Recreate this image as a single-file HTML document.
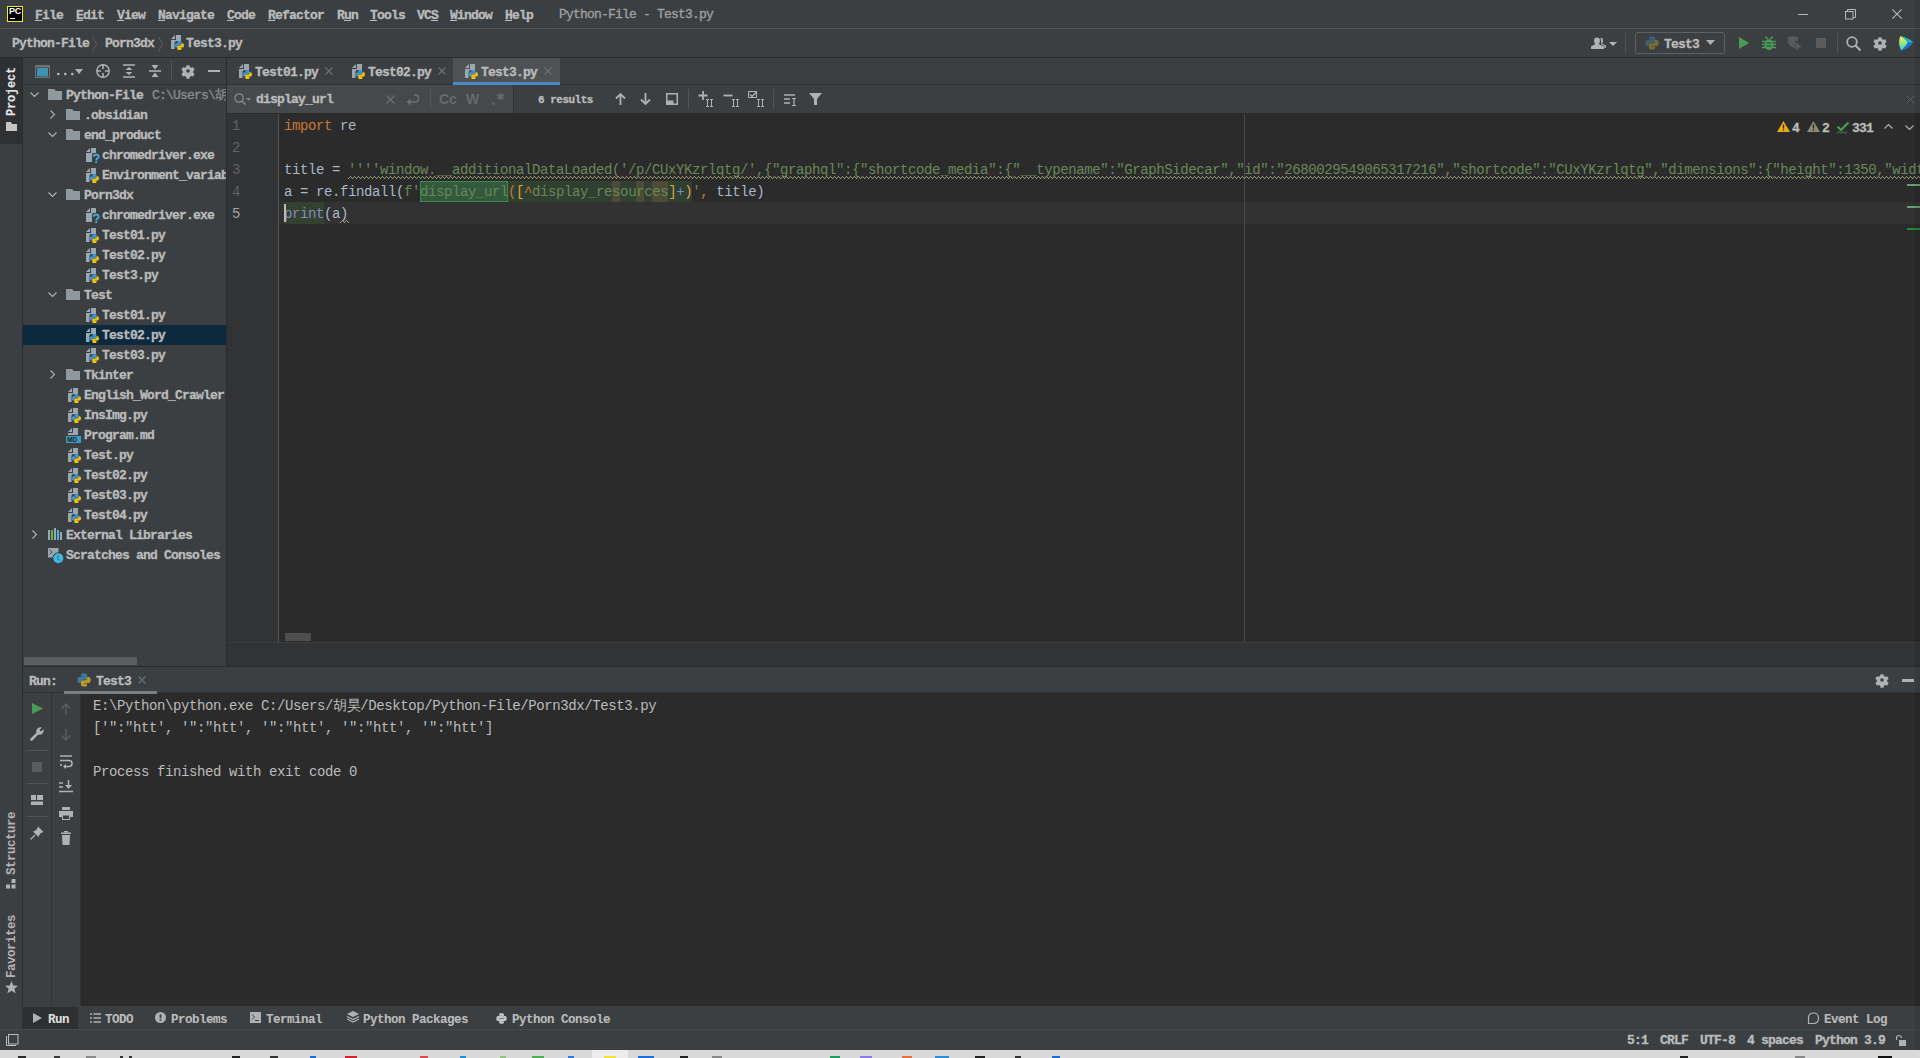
<!DOCTYPE html><html><head><meta charset="utf-8"><style>
*{box-sizing:border-box;margin:0;padding:0}
html,body{width:1920px;height:1058px;overflow:hidden;background:#3c3f41}
body{position:relative;font-family:"Liberation Mono",monospace;color:#bbbbbb}
.a{position:absolute}
.ui{position:absolute;font-family:"Liberation Mono",monospace;font-weight:bold;font-size:13px;letter-spacing:-0.8px;-webkit-text-stroke:0.3px currentColor;margin-top:1px;white-space:pre;line-height:16px;color:#bbbbbb}
.code{position:absolute;font-family:"Liberation Mono",monospace;font-size:14px;letter-spacing:-0.4px;white-space:pre;line-height:22px;height:22px}
svg{position:absolute;overflow:visible}
:root{--pb:#3b95d3;--py:#f2c40c}
.bt{font-size:12.5px !important;letter-spacing:-0.5px !important}
.k{color:#cc7832}.s{color:#6a8759}.t{color:#a9b7c6}.n{color:#6897bb}.b{color:#8888c6}
</style></head><body>

<svg width="0" height="0" style="position:absolute">
<defs>
<symbol id="pylogo" viewBox="0 0 16 16">
<path d="M6 0.5H9.5Q11.5 0.5 11.5 2.5V6.2Q11.5 7.8 10 7.8H6.2Q4.5 7.8 4.5 9.5V11.5H2.5Q0.5 11.5 0.5 9V7Q0.5 4.5 3 4.5H8V4H4.5V2.5Q4.5 0.5 6 0.5Z" style="fill:var(--pb)"/>
<path d="M10 15.5H6.5Q4.5 15.5 4.5 13.5V9.8Q4.5 8.2 6 8.2H9.8Q11.5 8.2 11.5 6.5V4.5H13.5Q15.5 4.5 15.5 7V9Q15.5 11.5 13 11.5H8V12H11.5V13.5Q11.5 15.5 10 15.5Z" style="fill:var(--py)"/>
</symbol>
<symbol id="pyf" viewBox="0 0 16 16">
<path d="M2 5L6 1V5Z" fill="#9aa7b0"/>
<path d="M7 1H12V7H7.5Q5.5 7 5.5 9V15H2V6H7Z" fill="#9aa7b0"/>
<use href="#pylogo" x="5.6" y="6.6" width="9.6" height="9.6"/>
</symbol>
<symbol id="exef" viewBox="0 0 16 16">
<path d="M2 5L6 1V5Z" fill="#9aa7b0"/>
<path d="M7 1H12V6H9.5Q8 6 8 8V15H2V6H7Z" fill="#9aa7b0"/>
<path d="M9.7 9.8Q9.7 7.6 12.2 7.6Q14.6 7.6 14.6 9.7Q14.6 11 13.2 11.6Q12.2 12 12.2 13.4" fill="none" stroke="#40b6e0" stroke-width="1.7"/>
<rect x="11.3" y="14.3" width="1.8" height="1.8" fill="#40b6e0"/>
</symbol>
<symbol id="mdf" viewBox="0 0 16 16">
<path d="M2 5L6 1V5Z" fill="#9aa7b0"/>
<path d="M7 1H12V8H2V6H7Z" fill="#9aa7b0"/>
<rect x="0" y="9" width="15" height="7" fill="#3d9bc7"/>
<text x="1.2" y="15" font-family="Liberation Sans" font-weight="bold" font-size="6.5" fill="#231f20">MD</text>
</symbol>
<symbol id="folder" viewBox="0 0 14 11">
<path d="M0 0H6L8 2H14V11H0Z" fill="#8d989f"/>
</symbol>
</defs></svg>

<div class="a" style="left:0px;top:28px;width:1920px;height:1px;background:#515354;"></div>
<div class="a" style="left:7px;top:6px;width:16px;height:16px;background:#000;border:1px solid #f4ea2d"></div>
<div class="a" style="left:9px;top:7px;font:bold 9px 'Liberation Sans',sans-serif;color:#fff;letter-spacing:-0.3px;line-height:9px">PC</div>
<div class="a" style="left:10px;top:18px;width:5px;height:1px;background:#fff;"></div>
<div class="ui" style="left:35px;top:7px;">File</div>
<div class="a" style="left:35px;top:20px;width:7px;height:1px;background:#bbbbbb;"></div>
<div class="ui" style="left:76px;top:7px;">Edit</div>
<div class="a" style="left:76px;top:20px;width:7px;height:1px;background:#bbbbbb;"></div>
<div class="ui" style="left:117px;top:7px;">View</div>
<div class="a" style="left:117px;top:20px;width:7px;height:1px;background:#bbbbbb;"></div>
<div class="ui" style="left:158px;top:7px;">Navigate</div>
<div class="a" style="left:158px;top:20px;width:7px;height:1px;background:#bbbbbb;"></div>
<div class="ui" style="left:227px;top:7px;">Code</div>
<div class="a" style="left:227px;top:20px;width:7px;height:1px;background:#bbbbbb;"></div>
<div class="ui" style="left:268px;top:7px;">Refactor</div>
<div class="a" style="left:268px;top:20px;width:7px;height:1px;background:#bbbbbb;"></div>
<div class="ui" style="left:337px;top:7px;">Run</div>
<div class="a" style="left:344px;top:20px;width:7px;height:1px;background:#bbbbbb;"></div>
<div class="ui" style="left:370px;top:7px;">Tools</div>
<div class="a" style="left:370px;top:20px;width:7px;height:1px;background:#bbbbbb;"></div>
<div class="ui" style="left:417px;top:7px;">VCS</div>
<div class="a" style="left:431px;top:20px;width:7px;height:1px;background:#bbbbbb;"></div>
<div class="ui" style="left:450px;top:7px;">Window</div>
<div class="a" style="left:450px;top:20px;width:7px;height:1px;background:#bbbbbb;"></div>
<div class="ui" style="left:505px;top:7px;">Help</div>
<div class="a" style="left:505px;top:20px;width:7px;height:1px;background:#bbbbbb;"></div>
<div class="ui" style="left:559px;top:6px;color:#a0a0a0;font-weight:normal">Python-File - Test3.py</div>
<div class="a" style="left:1798px;top:14px;width:10px;height:1px;background:#b8b8b8;"></div>
<svg style="left:1845px;top:9px" width="11" height="11" viewBox="0 0 11 11"><rect x="0.5" y="2.5" width="7.5" height="7.5" fill="none" stroke="#b8b8b8"/><path d="M2.5 2.5V0.5H10.5V8.5H8" fill="none" stroke="#b8b8b8"/></svg>
<svg style="left:1892px;top:9px" width="10" height="10" viewBox="0 0 10 10"><path d="M0.3 0.3L9.7 9.7M9.7 0.3L0.3 9.7" stroke="#b8b8b8" stroke-width="1.1"/></svg>
<div class="ui" style="left:12px;top:35px;">Python-File</div>
<svg style="left:92px;top:36px" width="6" height="16" viewBox="0 0 6 16"><path d="M0.5 0.5L4.5 8L0.5 15.5" fill="none" stroke="#5b5d5f"/></svg>
<div class="ui" style="left:105px;top:35px;">Porn3dx</div>
<svg style="left:158px;top:36px" width="6" height="16" viewBox="0 0 6 16"><path d="M0.5 0.5L4.5 8L0.5 15.5" fill="none" stroke="#5b5d5f"/></svg>
<svg style="left:169px;top:34px" width="16" height="16"><use href="#pyf" width="16" height="16"/></svg>
<div class="ui" style="left:186px;top:35px;">Test3.py</div>
<svg style="left:1591px;top:37px" width="26" height="13" viewBox="0 0 26 13"><path d="M3 3.5Q3 0.5 6 0.5Q9 0.5 9 3.5Q9 6 7.5 7L13 9.5V12H0V9.5L4.5 7Q3 6 3 3.5Z" fill="#afb1b3"/><path d="M9.5 0.8Q12 0.5 12 3.5Q12 5.5 11 6.5L15 8.5V11H13.5V9L10.5 7.5" fill="#afb1b3"/><path d="M18 5H26L22 9Z" fill="#afb1b3"/></svg>
<div class="a" style="left:1625px;top:33px;width:1px;height:20px;background:#515354;"></div>
<div class="a" style="left:1635px;top:32px;width:90px;height:22px;border:1px solid #5e6163;border-radius:3px"></div>
<svg style="left:1645px;top:36px;--pb:#3e6075;--py:#7a6d33" width="14" height="14"><use href="#pylogo" width="14" height="14"/></svg>
<div class="ui" style="left:1664px;top:36px;">Test3</div>
<svg style="left:1706px;top:40px" width="9" height="6" viewBox="0 0 9 6"><path d="M0 0H9L4.5 5Z" fill="#afb1b3"/></svg>
<svg style="left:1739px;top:37px" width="10" height="12" viewBox="0 0 10 12"><path d="M0 0L10 6L0 12Z" fill="#499c54"/></svg>
<svg style="left:1762px;top:36px" width="14" height="14" viewBox="0 0 14 14"><path d="M3.3 0.5L6 3.2M10.7 0.5L8 3.2" stroke="#499c54" stroke-width="1.6"/><ellipse cx="7" cy="8.6" rx="4.2" ry="5.4" fill="#499c54"/><path d="M0 5.5H14M0 8.5H14M0 11.5H14" stroke="#499c54" stroke-width="1.5"/><path d="M4.6 7H9.4M4.6 10H9.4" stroke="#3c3f41" stroke-width="1.1"/></svg>
<svg style="left:1788px;top:36px" width="16" height="14" viewBox="0 0 16 14"><path d="M0 1Q5 -0.5 10 1V5H7.5V12.5Q0.5 10.5 0 6Z" fill="#5a5a5a"/><path d="M8 6.5V14L13.5 10.2Z" fill="#5a5a5a"/></svg>
<div class="a" style="left:1816px;top:38px;width:10px;height:10px;background:#5b5b5b;"></div>
<div class="a" style="left:1837px;top:33px;width:1px;height:20px;background:#515354;"></div>
<svg style="left:1846px;top:36px" width="16" height="16" viewBox="0 0 16 16"><circle cx="6" cy="6" r="4.8" fill="none" stroke="#afb1b3" stroke-width="1.8"/><path d="M9.5 9.5L14.5 14.5" stroke="#afb1b3" stroke-width="2"/></svg>
<svg style="left:1873px;top:36px" width="14" height="14" viewBox="-0.8 -0.8 15.6 15.6"><path d="M7 7m-1.6 -6.5h3.2l0.5 2.1 1.6 0.9 2.1-0.7 1.6 2.8-1.6 1.5v1.8l1.6 1.5-1.6 2.8-2.1-0.7-1.6 0.9-0.5 2.1h-3.2l-0.5-2.1-1.6-0.9-2.1 0.7-1.6-2.8 1.6-1.5v-1.8l-1.6-1.5 1.6-2.8 2.1 0.7 1.6-0.9z" fill="#afb1b3"/><circle cx="7" cy="7" r="2" fill="#3c3f41"/></svg>
<svg style="left:1899px;top:36px" width="15" height="15" viewBox="0 0 15 15"><defs><linearGradient id="jb1" x1="0" y1="0" x2="0" y2="1"><stop offset="0" stop-color="#fbf54c"/><stop offset="0.5" stop-color="#9be47a"/><stop offset="1" stop-color="#1fd0ee"/></linearGradient></defs><path d="M1.5 0C6 3 9 5 8.5 7C8 9 5 12 2.5 14.5C-0.5 10 -0.5 4 1.5 0Z" fill="url(#jb1)"/><path d="M1.5 0C6 0.5 11 3 14.5 6.5L8.5 7C9 5 6 3 1.5 0Z" fill="#16b6c9"/><path d="M8.5 7L14.5 6.5C11 11 6 14 2.5 14.5C5 12 8 9 8.5 7Z" fill="#1e6fd6"/></svg>
<div class="a" style="left:0px;top:57px;width:1920px;height:1px;background:#2b2b2b;"></div>
<div class="a" style="left:0px;top:58px;width:22px;height:948px;background:#3c3f41;"></div>
<div class="a" style="left:0px;top:58px;width:22px;height:86px;background:#2e3032;"></div>
<div class="a" style="left:22px;top:58px;width:1px;height:948px;background:#2b2b2b;"></div>
<div class="ui" style="left:6px;top:115px;transform-origin:0 0;transform:rotate(-90deg);color:#e6e6e6;line-height:13px;font-size:12px;letter-spacing:-0.2px;-webkit-text-stroke:0.1px currentColor">Project</div>
<svg style="left:6px;top:122px" width="11" height="9" viewBox="0 0 11 9"><path d="M0 0H5L6 2H11V9H0Z" fill="#c4c4c4"/></svg>
<div class="ui" style="left:5px;top:874px;transform-origin:0 0;transform:rotate(-90deg);line-height:14px;color:#b4b4b4;font-size:12.5px;letter-spacing:-0.5px;-webkit-text-stroke:0">Structure</div>
<svg style="left:6px;top:879px" width="10" height="10" viewBox="0 0 10 10"><rect x="5.5" y="0" width="4" height="4" fill="#afb1b3"/><rect x="0" y="5.5" width="4" height="4" fill="#afb1b3"/><rect x="5.5" y="5.5" width="4" height="4" fill="#afb1b3"/></svg>
<div class="ui" style="left:5px;top:977px;transform-origin:0 0;transform:rotate(-90deg);line-height:14px;color:#b4b4b4;font-size:12.5px;letter-spacing:-0.5px;-webkit-text-stroke:0">Favorites</div>
<svg style="left:5px;top:981px" width="13" height="13" viewBox="0 0 13 13"><path d="M6.5 0L8.3 4.4L13 4.7L9.4 7.7L10.6 12.3L6.5 9.7L2.4 12.3L3.6 7.7L0 4.7L4.7 4.4Z" fill="#afb1b3"/></svg>
<div class="a" style="left:23px;top:58px;width:203px;height:608px;background:#3c3f41;"></div>
<div class="a" style="left:226px;top:58px;width:1px;height:608px;background:#2b2b2b;"></div>
<svg style="left:35px;top:65px" width="15" height="13" viewBox="0 0 15 13"><rect x="0.5" y="0.5" width="14" height="12" fill="none" stroke="#6e7376"/><rect x="0.5" y="0.5" width="14" height="2" fill="#6e7376"/><rect x="2" y="3" width="11" height="8.5" fill="#3e93b5"/></svg>
<svg style="left:57px;top:69px" width="27" height="6" viewBox="0 0 27 6"><circle cx="1.3" cy="5" r="1.3" fill="#bbbbbb"/><circle cx="8.3" cy="5" r="1.3" fill="#bbbbbb"/><circle cx="15.3" cy="5" r="1.3" fill="#bbbbbb"/><path d="M18 0H26L22 5Z" fill="#afb1b3"/></svg>
<svg style="left:96px;top:64px" width="14" height="14" viewBox="0 0 14 14"><circle cx="7" cy="7" r="6.2" fill="none" stroke="#afb1b3" stroke-width="1.4"/><path d="M7 0.5V5M7 9V13.5M0.5 7H5M9 7H13.5" stroke="#afb1b3" stroke-width="1.6"/></svg>
<svg style="left:123px;top:64px" width="12" height="14" viewBox="0 0 12 14"><path d="M0 1H12M0 13H12" stroke="#afb1b3" stroke-width="1.6"/><path d="M6 3L9.5 6H2.5ZM6 11L9.5 8H2.5Z" fill="#afb1b3"/></svg>
<svg style="left:149px;top:64px" width="12" height="14" viewBox="0 0 12 14"><path d="M0 7H12" stroke="#afb1b3" stroke-width="1.6"/><path d="M6 5.5L9.5 1H2.5ZM6 8.5L9.5 13H2.5Z" fill="#afb1b3"/></svg>
<div class="a" style="left:171px;top:61px;width:1px;height:20px;background:#515354;"></div>
<svg style="left:181px;top:64px" width="14" height="14" viewBox="-0.8 -0.8 15.6 15.6"><path d="M7 7m-1.6 -6.5h3.2l0.5 2.1 1.6 0.9 2.1-0.7 1.6 2.8-1.6 1.5v1.8l1.6 1.5-1.6 2.8-2.1-0.7-1.6 0.9-0.5 2.1h-3.2l-0.5-2.1-1.6-0.9-2.1 0.7-1.6-2.8 1.6-1.5v-1.8l-1.6-1.5 1.6-2.8 2.1 0.7 1.6-0.9z" fill="#afb1b3"/><circle cx="7" cy="7" r="2" fill="#3c3f41"/></svg>
<div class="a" style="left:208px;top:70px;width:12px;height:2px;background:#afb1b3;"></div>
<div class="a" style="left:23px;top:84px;width:203px;height:1px;background:#323232;"></div>
<div class="a" style="left:23px;top:325px;width:203px;height:20px;background:#0d293e;"></div>
<div class="a" style="left:23px;top:85px;width:203px;height:560px;overflow:hidden">
<svg style="left:7px;top:7px" width="9" height="5" viewBox="0 0 9 5"><path d="M0.5 0.5L4.5 4.5L8.5 0.5" fill="none" stroke="#afb1b3" stroke-width="1.1"/></svg>
<svg style="left:25px;top:4px" width="14" height="11" viewBox="0 0 14 11"><use href="#folder" width="14" height="11"/></svg>
<div class="ui" style="left:43px;top:2px;">Python-File</div>
<div class="ui" style="left:129px;top:2px;color:#8c8c8c;font-weight:normal;letter-spacing:-0.8px">C:\Users\胡昊\Desktop\Python-File</div>
<svg style="left:27px;top:25px" width="5" height="9" viewBox="0 0 5 9"><path d="M0.5 0.5L4.5 4.5L0.5 8.5" fill="none" stroke="#afb1b3" stroke-width="1.1"/></svg>
<svg style="left:43px;top:24px" width="14" height="11" viewBox="0 0 14 11"><use href="#folder" width="14" height="11"/></svg>
<div class="ui" style="left:61px;top:22px;">.obsidian</div>
<svg style="left:25px;top:47px" width="9" height="5" viewBox="0 0 9 5"><path d="M0.5 0.5L4.5 4.5L8.5 0.5" fill="none" stroke="#afb1b3" stroke-width="1.1"/></svg>
<svg style="left:43px;top:44px" width="14" height="11" viewBox="0 0 14 11"><use href="#folder" width="14" height="11"/></svg>
<div class="ui" style="left:61px;top:42px;">end_product</div>
<svg style="left:61px;top:62px" width="16" height="16"><use href="#exef" width="16" height="16"/></svg>
<div class="ui" style="left:79px;top:62px;">chromedriver.exe</div>
<svg style="left:61px;top:82px" width="16" height="16"><use href="#pyf" width="16" height="16"/></svg>
<div class="ui" style="left:79px;top:82px;">Environment_variab</div>
<svg style="left:25px;top:107px" width="9" height="5" viewBox="0 0 9 5"><path d="M0.5 0.5L4.5 4.5L8.5 0.5" fill="none" stroke="#afb1b3" stroke-width="1.1"/></svg>
<svg style="left:43px;top:104px" width="14" height="11" viewBox="0 0 14 11"><use href="#folder" width="14" height="11"/></svg>
<div class="ui" style="left:61px;top:102px;">Porn3dx</div>
<svg style="left:61px;top:122px" width="16" height="16"><use href="#exef" width="16" height="16"/></svg>
<div class="ui" style="left:79px;top:122px;">chromedriver.exe</div>
<svg style="left:61px;top:142px" width="16" height="16"><use href="#pyf" width="16" height="16"/></svg>
<div class="ui" style="left:79px;top:142px;">Test01.py</div>
<svg style="left:61px;top:162px" width="16" height="16"><use href="#pyf" width="16" height="16"/></svg>
<div class="ui" style="left:79px;top:162px;">Test02.py</div>
<svg style="left:61px;top:182px" width="16" height="16"><use href="#pyf" width="16" height="16"/></svg>
<div class="ui" style="left:79px;top:182px;">Test3.py</div>
<svg style="left:25px;top:207px" width="9" height="5" viewBox="0 0 9 5"><path d="M0.5 0.5L4.5 4.5L8.5 0.5" fill="none" stroke="#afb1b3" stroke-width="1.1"/></svg>
<svg style="left:43px;top:204px" width="14" height="11" viewBox="0 0 14 11"><use href="#folder" width="14" height="11"/></svg>
<div class="ui" style="left:61px;top:202px;">Test</div>
<svg style="left:61px;top:222px" width="16" height="16"><use href="#pyf" width="16" height="16"/></svg>
<div class="ui" style="left:79px;top:222px;">Test01.py</div>
<svg style="left:61px;top:242px" width="16" height="16"><use href="#pyf" width="16" height="16"/></svg>
<div class="ui" style="left:79px;top:242px;">Test02.py</div>
<svg style="left:61px;top:262px" width="16" height="16"><use href="#pyf" width="16" height="16"/></svg>
<div class="ui" style="left:79px;top:262px;">Test03.py</div>
<svg style="left:27px;top:285px" width="5" height="9" viewBox="0 0 5 9"><path d="M0.5 0.5L4.5 4.5L0.5 8.5" fill="none" stroke="#afb1b3" stroke-width="1.1"/></svg>
<svg style="left:43px;top:284px" width="14" height="11" viewBox="0 0 14 11"><use href="#folder" width="14" height="11"/></svg>
<div class="ui" style="left:61px;top:282px;">Tkinter</div>
<svg style="left:43px;top:302px" width="16" height="16"><use href="#pyf" width="16" height="16"/></svg>
<div class="ui" style="left:61px;top:302px;">English_Word_Crawler</div>
<svg style="left:43px;top:322px" width="16" height="16"><use href="#pyf" width="16" height="16"/></svg>
<div class="ui" style="left:61px;top:322px;">InsImg.py</div>
<svg style="left:43px;top:342px" width="16" height="16"><use href="#mdf" width="16" height="16"/></svg>
<div class="ui" style="left:61px;top:342px;">Program.md</div>
<svg style="left:43px;top:362px" width="16" height="16"><use href="#pyf" width="16" height="16"/></svg>
<div class="ui" style="left:61px;top:362px;">Test.py</div>
<svg style="left:43px;top:382px" width="16" height="16"><use href="#pyf" width="16" height="16"/></svg>
<div class="ui" style="left:61px;top:382px;">Test02.py</div>
<svg style="left:43px;top:402px" width="16" height="16"><use href="#pyf" width="16" height="16"/></svg>
<div class="ui" style="left:61px;top:402px;">Test03.py</div>
<svg style="left:43px;top:422px" width="16" height="16"><use href="#pyf" width="16" height="16"/></svg>
<div class="ui" style="left:61px;top:422px;">Test04.py</div>
<svg style="left:9px;top:445px" width="5" height="9" viewBox="0 0 5 9"><path d="M0.5 0.5L4.5 4.5L0.5 8.5" fill="none" stroke="#afb1b3" stroke-width="1.1"/></svg>
<svg style="left:25px;top:443px" width="14" height="12" viewBox="0 0 14 12"><rect x="0" y="2" width="2" height="10" fill="#9aa7b0"/><rect x="3" y="2" width="2" height="10" fill="#62b543"/><rect x="6" y="0" width="2" height="12" fill="#9aa7b0"/><rect x="9" y="2" width="2" height="10" fill="#40b6e0"/><rect x="12" y="4" width="2" height="8" fill="#9aa7b0"/></svg>
<div class="ui" style="left:43px;top:442px;">External Libraries</div>
<svg style="left:25px;top:463px" width="16" height="16" viewBox="0 0 16 16"><rect x="0" y="0" width="10.5" height="9.5" fill="#9aa7b0"/><path d="M1.5 1.5L4 4L1.5 6.5" fill="none" stroke="#3c3f41" stroke-width="0.9"/><circle cx="10.3" cy="10.3" r="6" fill="#3c3f41"/><circle cx="10.3" cy="10.3" r="5" fill="#40b6e0"/><path d="M9.8 7.5V10.8L11.5 12.3" stroke="#2d6e86" stroke-width="1" fill="none"/></svg>
<div class="ui" style="left:43px;top:462px;">Scratches and Consoles</div>
</div>
<div class="a" style="left:24px;top:657px;width:113px;height:8px;background:#5a5d5f;"></div>
<div class="a" style="left:23px;top:666px;width:1897px;height:1px;background:#2b2b2b;"></div>
<div class="a" style="left:227px;top:58px;width:1693px;height:26px;background:#3c3f41;"></div>
<div class="a" style="left:453px;top:58px;width:107px;height:24px;background:#4e5254;"></div>
<svg style="left:237px;top:63px" width="16" height="16"><use href="#pyf" width="16" height="16"/></svg>
<div class="ui" style="left:255px;top:64px;">Test01.py</div>
<svg style="left:325px;top:67px" width="8" height="8" viewBox="0 0 8 8"><path d="M0.5 0.5L7.5 7.5M7.5 0.5L0.5 7.5" stroke="#6e7072" stroke-width="1.1"/></svg>
<svg style="left:350px;top:63px" width="16" height="16"><use href="#pyf" width="16" height="16"/></svg>
<div class="ui" style="left:368px;top:64px;">Test02.py</div>
<svg style="left:438px;top:67px" width="8" height="8" viewBox="0 0 8 8"><path d="M0.5 0.5L7.5 7.5M7.5 0.5L0.5 7.5" stroke="#6e7072" stroke-width="1.1"/></svg>
<svg style="left:463px;top:63px" width="16" height="16"><use href="#pyf" width="16" height="16"/></svg>
<div class="ui" style="left:481px;top:64px;">Test3.py</div>
<svg style="left:544px;top:67px" width="8" height="8" viewBox="0 0 8 8"><path d="M0.5 0.5L7.5 7.5M7.5 0.5L0.5 7.5" stroke="#6e7072" stroke-width="1.1"/></svg>
<div class="a" style="left:227px;top:84px;width:1693px;height:1px;background:#323232;"></div>
<div class="a" style="left:453px;top:82px;width:107px;height:3px;background:#4a88c7;"></div>
<div class="a" style="left:227px;top:85px;width:1693px;height:28px;background:#3c3f41;"></div>
<div class="a" style="left:227px;top:85px;width:286px;height:28px;background:#45494a;"></div>
<div class="a" style="left:513px;top:85px;width:1px;height:28px;background:#323232;"></div>
<svg style="left:234px;top:93px" width="17" height="13" viewBox="0 0 17 13"><circle cx="5" cy="5" r="4.2" fill="none" stroke="#868a8d" stroke-width="1.2"/><path d="M8 8L11.5 11.5" stroke="#868a8d" stroke-width="1.4"/><path d="M12 5H17L14.5 7.5Z" fill="#868a8d"/></svg>
<div class="ui" style="left:256px;top:91px;">display_url</div>
<svg style="left:386px;top:95px" width="9" height="9" viewBox="0 0 9 9"><path d="M0.5 0.5L8.5 8.5M8.5 0.5L0.5 8.5" stroke="#6e7072" stroke-width="1.1"/></svg>
<svg style="left:406px;top:94px" width="13" height="12" viewBox="0 0 13 12"><path d="M4 8H9.5Q12.5 8 12.5 4.5Q12.5 1 9.5 1H8" fill="none" stroke="#6e7072" stroke-width="1.4"/><path d="M0.5 8L4.5 4.5V11.5Z" fill="#6e7072"/></svg>
<div class="a" style="left:430px;top:89px;width:1px;height:20px;background:#53575a;"></div>
<div class="a" style="left:439px;top:91px;font:bold 14px 'Liberation Sans',sans-serif;color:#686b6e;letter-spacing:0">Cc</div>
<div class="a" style="left:466px;top:91px;font:bold 14px 'Liberation Sans',sans-serif;color:#686b6e">W</div>
<svg style="left:492px;top:92px" width="13" height="14" viewBox="0 0 13 14"><rect x="0.5" y="10.5" width="2.2" height="2.2" fill="#686b6e"/><path d="M8.5 1V8.6M5 2.8L12 6.8M12 2.8L5 6.8" stroke="#686b6e" stroke-width="1.7"/></svg>
<div class="ui" style="left:538px;top:91px;font-size:11px;letter-spacing:-0.5px">6 results</div>
<svg style="left:615px;top:93px" width="11" height="12" viewBox="0 0 11 12"><path d="M5.5 1V12M1 5.5L5.5 1L10 5.5" fill="none" stroke="#afb1b3" stroke-width="1.8"/></svg>
<svg style="left:640px;top:93px" width="11" height="12" viewBox="0 0 11 12"><path d="M5.5 0V11M1 6.5L5.5 11L10 6.5" fill="none" stroke="#afb1b3" stroke-width="1.8"/></svg>
<svg style="left:666px;top:93px" width="12" height="12" viewBox="0 0 12 12"><rect x="0.75" y="0.75" width="10.5" height="10.5" fill="none" stroke="#afb1b3" stroke-width="1.5"/><rect x="0.5" y="7.5" width="7" height="4.5" fill="#afb1b3"/></svg>
<div class="a" style="left:688px;top:89px;width:1px;height:20px;background:#515354;"></div>
<svg style="left:698px;top:91px" width="16" height="16" viewBox="0 0 16 16"><path d="M5 0V9M0.5 4.5H9.5" stroke="#afb1b3" stroke-width="1.8"/><path d="M8 8.5H11M9.5 8.5V15.5M8 15.5H11M12 8.5H15M13.5 8.5V15.5M12 15.5H15" stroke="#afb1b3" stroke-width="1"/></svg>
<svg style="left:723px;top:91px" width="17" height="16" viewBox="0 0 17 16"><path d="M0.5 4.5H9.5" stroke="#afb1b3" stroke-width="1.8"/><path d="M9 8.5H12M10.5 8.5V15.5M9 15.5H12M13 8.5H16M14.5 8.5V15.5M13 15.5H16" stroke="#afb1b3" stroke-width="1"/></svg>
<svg style="left:748px;top:91px" width="17" height="16" viewBox="0 0 17 16"><path d="M0.5 0.5H8.5V6.5H0.5Z" fill="none" stroke="#afb1b3"/><path d="M2 3.5L4 5.5L9 0.5" fill="none" stroke="#afb1b3" stroke-width="1.3"/><path d="M9 8.5H12M10.5 8.5V15.5M9 15.5H12M13 8.5H16M14.5 8.5V15.5M13 15.5H16" stroke="#afb1b3" stroke-width="1"/></svg>
<div class="a" style="left:773px;top:89px;width:1px;height:20px;background:#515354;"></div>
<svg style="left:784px;top:94px" width="13" height="12" viewBox="0 0 13 12"><path d="M0 1H11M0 5H6M0 9H6" stroke="#afb1b3" stroke-width="1.6"/><path d="M10 4.5V11.5M8 4.5H12M8 11.5H12" stroke="#afb1b3" stroke-width="1.2"/></svg>
<svg style="left:809px;top:93px" width="13" height="13" viewBox="0 0 13 13"><path d="M0 0H13L8 6V12H5V6Z" fill="#afb1b3"/></svg>
<svg style="left:1906px;top:95px" width="9" height="9" viewBox="0 0 9 9"><path d="M0.5 0.5L8.5 8.5M8.5 0.5L0.5 8.5" stroke="#5e6163" stroke-width="1"/></svg>
<div class="a" style="left:227px;top:113px;width:1693px;height:1px;background:#2b2b2b;"></div>
<div class="a" style="left:227px;top:114px;width:1693px;height:528px;background:#2b2b2b;"></div>
<div class="a" style="left:227px;top:114px;width:51px;height:528px;background:#313335;"></div>
<div class="a" style="left:278px;top:114px;width:1px;height:528px;background:#555555;"></div>
<div class="a" style="left:279px;top:202px;width:1641px;height:22px;background:#323232;"></div>
<div class="a" style="left:1244px;top:114px;width:1px;height:528px;background:#494949;"></div>
<div class="code" style="left:232px;top:115px;color:#606366">1</div>
<div class="code" style="left:232px;top:137px;color:#606366">2</div>
<div class="code" style="left:232px;top:159px;color:#606366">3</div>
<div class="code" style="left:232px;top:181px;color:#606366">4</div>
<div class="code" style="left:232px;top:203px;color:#a4a3a3">5</div>
<div class="a" style="left:420px;top:181px;width:88px;height:21px;background:#32593d;border:1px solid #3d8a4f"></div>
<div class="a" style="left:508px;top:181px;width:184px;height:21px;background:#2f3f30;"></div>
<div class="a" style="left:612px;top:181px;width:8px;height:21px;background:#4c4b36;"></div>
<div class="a" style="left:636px;top:181px;width:8px;height:21px;background:#4c4b36;"></div>
<div class="a" style="left:652px;top:181px;width:16px;height:21px;background:#4c4b36;"></div>
<div class="a" style="left:284px;top:202px;width:40px;height:22px;background:#33412f;"></div>
<svg style="left:348px;top:176px" width="1572" height="3" shape-rendering="crispEdges"><defs><pattern id="wv" width="4" height="3" patternUnits="userSpaceOnUse"><rect x="0" y="2" width="1" height="1" fill="#9b9a74"/><rect x="1" y="1" width="1" height="1" fill="#9b9a74"/><rect x="2" y="0" width="1" height="1" fill="#9b9a74"/><rect x="3" y="1" width="1" height="1" fill="#9b9a74"/></pattern></defs><rect x="0" y="0" width="1572" height="3" fill="url(#wv)"/></svg>
<div class="code" style="left:284px;top:115px"><span class="k">import</span><span class="t"> re</span></div>
<div class="code" style="left:284px;top:159px"><span class="t">title = </span><span class="s">&#x27;&#x27;&#x27;&#x27;window.__additionalDataLoaded(&#x27;/p/CUxYKzrlqtg/&#x27;,{&quot;graphql&quot;:{&quot;shortcode_media&quot;:{&quot;__typename&quot;:&quot;GraphSidecar&quot;,&quot;id&quot;:&quot;2680029549065317216&quot;,&quot;shortcode&quot;:&quot;CUxYKzrlqtg&quot;,&quot;dimensions&quot;:{&quot;height&quot;:1350,&quot;widt</span></div>
<div class="code" style="left:284px;top:181px"><span class="t">a = re.findall(</span><span class="s">f&#x27;display_url</span><span class="k">(</span><span class="k2">[</span><span class="k">^</span><span class="s">display_resources</span><span class="k2">]</span><span class="n">+</span><span class="k2">)</span><span class="s">&#x27;</span><span class="k">, </span><span class="t">title)</span></div>
<div class="code" style="left:284px;top:203px"><span class="b">print</span><span class="t">(a)</span></div>
<style>.k2{color:#d8a445}</style>
<div class="a" style="left:284px;top:204px;width:2px;height:18px;background:#bbbbbb;"></div>
<svg style="left:340px;top:220px" width="9" height="3" shape-rendering="crispEdges"><rect x="0" y="2" width="1" height="1" fill="#9b9a74"/><rect x="1" y="1" width="1" height="1" fill="#9b9a74"/><rect x="2" y="0" width="1" height="1" fill="#9b9a74"/><rect x="3" y="1" width="1" height="1" fill="#9b9a74"/><rect x="4" y="2" width="1" height="1" fill="#9b9a74"/><rect x="5" y="1" width="1" height="1" fill="#9b9a74"/><rect x="6" y="0" width="1" height="1" fill="#9b9a74"/><rect x="7" y="1" width="1" height="1" fill="#9b9a74"/><rect x="8" y="2" width="1" height="1" fill="#9b9a74"/></svg>
<svg style="left:1777px;top:121px" width="13" height="11" viewBox="0 0 13 11"><path d="M6.5 0L13 11H0Z" fill="#e9ac15"/><rect x="5.8" y="3.5" width="1.4" height="4" fill="#2b2b2b"/><rect x="5.8" y="8.3" width="1.4" height="1.4" fill="#2b2b2b"/></svg>
<div class="ui" style="left:1792px;top:120px;">4</div>
<svg style="left:1807px;top:121px" width="13" height="11" viewBox="0 0 13 11"><path d="M6.5 0L13 11H0Z" fill="#8e8a72"/><rect x="5.8" y="3.5" width="1.4" height="4" fill="#2b2b2b"/><rect x="5.8" y="8.3" width="1.4" height="1.4" fill="#2b2b2b"/></svg>
<div class="ui" style="left:1822px;top:120px;">2</div>
<svg style="left:1837px;top:122px" width="12" height="13" viewBox="0 0 12 13"><path d="M0.5 4.5L4 8L11.5 0.5" fill="none" stroke="#499c54" stroke-width="2.2"/><path d="M0 11.5L2 9.5L4 11.5L6 9.5L8 11.5L10 9.5" fill="none" stroke="#499c54" stroke-width="0.9"/></svg>
<div class="ui" style="left:1852px;top:120px;">331</div>
<svg style="left:1884px;top:124px" width="9" height="5" viewBox="0 0 9 5"><path d="M0.5 4.5L4.5 0.5L8.5 4.5" fill="none" stroke="#afb1b3" stroke-width="1.1"/></svg>
<svg style="left:1905px;top:125px" width="9" height="5" viewBox="0 0 9 5"><path d="M0.5 0.5L4.5 4.5L8.5 0.5" fill="none" stroke="#afb1b3" stroke-width="1.1"/></svg>
<div class="a" style="left:1907px;top:184px;width:13px;height:2px;background:#6a9f6f;"></div>
<div class="a" style="left:1907px;top:206px;width:13px;height:2px;background:#6a9f6f;"></div>
<div class="a" style="left:1907px;top:228px;width:13px;height:2px;background:#1f8a2f;"></div>
<div class="a" style="left:227px;top:642px;width:1693px;height:1px;background:#3a3c3e;"></div>
<div class="a" style="left:227px;top:643px;width:1693px;height:23px;background:#313335;"></div>
<div class="a" style="left:285px;top:633px;width:26px;height:8px;background:#4e4e4e;"></div>
<div class="a" style="left:23px;top:667px;width:1897px;height:25px;background:#3c3f41;"></div>
<div class="ui" style="left:29px;top:673px;">Run:</div>
<svg style="left:77px;top:673px;--pb:#3d7a9c;--py:#b89b2d" width="14" height="14"><use href="#pylogo" width="14" height="14"/></svg>
<div class="ui" style="left:96px;top:673px;">Test3</div>
<svg style="left:138px;top:676px" width="8" height="8" viewBox="0 0 8 8"><path d="M0.5 0.5L7.5 7.5M7.5 0.5L0.5 7.5" stroke="#6e7072" stroke-width="1.1"/></svg>
<svg style="left:1875px;top:673px" width="14" height="14" viewBox="-0.8 -0.8 15.6 15.6"><path d="M7 7m-1.6 -6.5h3.2l0.5 2.1 1.6 0.9 2.1-0.7 1.6 2.8-1.6 1.5v1.8l1.6 1.5-1.6 2.8-2.1-0.7-1.6 0.9-0.5 2.1h-3.2l-0.5-2.1-1.6-0.9-2.1 0.7-1.6-2.8 1.6-1.5v-1.8l-1.6-1.5 1.6-2.8 2.1 0.7 1.6-0.9z" fill="#afb1b3"/><circle cx="7" cy="7" r="2" fill="#3c3f41"/></svg>
<div class="a" style="left:1902px;top:679px;width:12px;height:3px;background:#afb1b3;"></div>
<div class="a" style="left:23px;top:692px;width:1897px;height:1px;background:#323232;"></div>
<div class="a" style="left:23px;top:693px;width:28px;height:313px;background:#3c3f41;"></div>
<div class="a" style="left:51px;top:693px;width:1px;height:313px;background:#323232;"></div>
<div class="a" style="left:52px;top:693px;width:28px;height:313px;background:#3c3f41;"></div>
<div class="a" style="left:80px;top:693px;width:1px;height:313px;background:#323232;"></div>
<div class="a" style="left:81px;top:693px;width:1839px;height:313px;background:#2b2b2b;"></div>
<div class="a" style="left:64px;top:691px;width:93px;height:3px;background:#787e84;"></div>
<svg style="left:32px;top:703px" width="11" height="11" viewBox="0 0 11 11"><path d="M0 0L11 5.5L0 11Z" fill="#499c54"/></svg>
<svg style="left:30px;top:727px" width="14" height="14" viewBox="0 0 14 14"><path d="M1.5 12.5L8 6" stroke="#afb1b3" stroke-width="2.6" stroke-linecap="round"/><path d="M7 7Q5 3 8 1Q10 0 12 0.5L9.5 3L11 4.5L13.5 2Q14 4 13 6Q11 9 7 7Z" fill="#afb1b3"/></svg>
<div class="a" style="left:27px;top:750px;width:21px;height:1px;background:#515354;"></div>
<div class="a" style="left:32px;top:762px;width:10px;height:10px;background:#5b5b5b;"></div>
<div class="a" style="left:27px;top:783px;width:21px;height:1px;background:#515354;"></div>
<svg style="left:31px;top:795px" width="12" height="10" viewBox="0 0 12 10"><rect x="0" y="0" width="5" height="5" fill="#afb1b3"/><rect x="6" y="0" width="6" height="5" fill="#afb1b3"/><rect x="0" y="6.5" width="12" height="3.5" fill="#afb1b3"/></svg>
<div class="a" style="left:27px;top:816px;width:21px;height:1px;background:#515354;"></div>
<svg style="left:30px;top:826px" width="14" height="14" viewBox="0 0 14 14"><path d="M0.5 13.5L5 9" stroke="#afb1b3" stroke-width="1.3"/><path d="M8 0.5L13.5 6L11 7L8.5 10L9 11.5L2.5 5L4 5.5L7 3Z" fill="#afb1b3"/></svg>
<svg style="left:60px;top:703px" width="12" height="12" viewBox="0 0 12 12"><path d="M6 1V12M1.5 5.5L6 1L10.5 5.5" fill="none" stroke="#5c5f61" stroke-width="1.4"/></svg>
<svg style="left:60px;top:729px" width="12" height="12" viewBox="0 0 12 12"><path d="M6 0V11M1.5 6.5L6 11L10.5 6.5" fill="none" stroke="#5c5f61" stroke-width="1.4"/></svg>
<svg style="left:59px;top:755px" width="14" height="14" viewBox="0 0 14 14"><path d="M1 1H13M1 5.5H10Q13 5.5 13 8.5Q13 11.5 10 11.5H6M1 10H3" fill="none" stroke="#afb1b3" stroke-width="1.5"/><path d="M4 11.5L7 9V14Z" fill="#afb1b3"/></svg>
<svg style="left:59px;top:780px" width="14" height="12" viewBox="0 0 14 12"><path d="M0 3H4M0 7H4M0 11.5H14" stroke="#afb1b3" stroke-width="1.5"/><path d="M9.5 0V7" stroke="#afb1b3" stroke-width="1.5"/><path d="M6 5L9.5 9L13 5Z" fill="#afb1b3"/></svg>
<svg style="left:59px;top:807px" width="14" height="13" viewBox="0 0 14 13"><rect x="3" y="0" width="8" height="3" fill="#afb1b3"/><rect x="0" y="4" width="14" height="6" fill="#afb1b3"/><rect x="3.5" y="8" width="7" height="4.5" fill="#3c3f41" stroke="#afb1b3" stroke-width="1"/></svg>
<svg style="left:61px;top:831px" width="10" height="14" viewBox="0 0 10 14"><rect x="0" y="1.5" width="10" height="1.5" fill="#afb1b3"/><rect x="3" y="0" width="4" height="1.5" fill="#afb1b3"/><path d="M1 4H9L8.5 14H1.5Z" fill="#afb1b3"/></svg>
<div class="code" style="left:93px;top:695px;color:#bbbbbb">E:\Python\python.exe C:/Users/胡昊/Desktop/Python-File/Porn3dx/Test3.py</div>
<div class="code" style="left:93px;top:717px;color:#bbbbbb">[&#x27;&quot;:&quot;htt&#x27;, &#x27;&quot;:&quot;htt&#x27;, &#x27;&quot;:&quot;htt&#x27;, &#x27;&quot;:&quot;htt&#x27;, &#x27;&quot;:&quot;htt&#x27;]</div>
<div class="code" style="left:93px;top:761px;color:#bbbbbb">Process finished with exit code 0</div>
<div class="a" style="left:23px;top:1006px;width:1897px;height:1px;background:#323232;"></div>
<div class="a" style="left:0px;top:1006px;width:1920px;height:23px;background:#3c3f41;"></div>
<div class="a" style="left:22px;top:1007px;width:56px;height:22px;background:#2d2f30;"></div>
<svg style="left:33px;top:1013px" width="9" height="10" viewBox="0 0 9 10"><path d="M0 0L9 5L0 10Z" fill="#afb1b3"/></svg>
<div class="ui" style="left:48px;top:1011px;color:#dfdfdf;font-size:12.5px;letter-spacing:-0.5px;-webkit-text-stroke:0.1px currentColor">Run</div>
<svg style="left:90px;top:1013px" width="11" height="10" viewBox="0 0 11 10"><path d="M0 1H2M0 5H2M0 9H2M3.5 1H11M3.5 5H11M3.5 9H11" stroke="#afb1b3" stroke-width="1.5"/></svg>
<div class="ui" style="left:105px;top:1011px;font-size:12.5px;letter-spacing:-0.5px;-webkit-text-stroke:0.1px currentColor">TODO</div>
<svg style="left:155px;top:1012px" width="11" height="11" viewBox="0 0 11 11"><circle cx="5.5" cy="5.5" r="5.5" fill="#afb1b3"/><rect x="4.6" y="2.3" width="1.8" height="4" fill="#3c3f41"/><rect x="4.6" y="7.3" width="1.8" height="1.6" fill="#3c3f41"/></svg>
<div class="ui" style="left:171px;top:1011px;font-size:12.5px;letter-spacing:-0.5px;-webkit-text-stroke:0.1px currentColor">Problems</div>
<svg style="left:250px;top:1012px" width="11" height="11" viewBox="0 0 11 11"><rect x="0" y="0" width="11" height="11" fill="#afb1b3"/><path d="M2 2.5L4.5 5L2 7.5" fill="none" stroke="#3c3f41" stroke-width="1"/><path d="M5 8.5H9" stroke="#3c3f41" stroke-width="1"/></svg>
<div class="ui" style="left:266px;top:1011px;font-size:12.5px;letter-spacing:-0.5px;-webkit-text-stroke:0.1px currentColor">Terminal</div>
<svg style="left:347px;top:1011px" width="12" height="13" viewBox="0 0 12 13"><path d="M6 0L12 3L6 6L0 3Z" fill="#afb1b3"/><path d="M0 5.5L6 8.5L12 5.5M0 8L6 11L12 8" fill="none" stroke="#afb1b3" stroke-width="1.2"/></svg>
<div class="ui" style="left:363px;top:1011px;font-size:12.5px;letter-spacing:-0.5px;-webkit-text-stroke:0.1px currentColor">Python Packages</div>
<svg style="left:496px;top:1013px;--pb:#c2c4c6;--py:#c2c4c6" width="11" height="11"><use href="#pylogo" width="11" height="11"/></svg>
<style>#bwpy use{filter:grayscale(1)}</style>
<div class="ui" style="left:512px;top:1011px;font-size:12.5px;letter-spacing:-0.5px;-webkit-text-stroke:0.1px currentColor">Python Console</div>
<svg style="left:1807px;top:1012px" width="13" height="13" viewBox="0 0 13 13"><path d="M1.5 12V6Q1.5 1 6.5 1Q11.5 1 11.5 6Q11.5 11.5 6.5 11.5H1.5Z" fill="none" stroke="#afb1b3" stroke-width="1.2"/></svg>
<div class="ui" style="left:1824px;top:1011px;font-size:12.5px;letter-spacing:-0.5px;-webkit-text-stroke:0.1px currentColor">Event Log</div>
<div class="a" style="left:0px;top:1029px;width:1920px;height:1px;background:#474849;"></div>
<div class="a" style="left:0px;top:1030px;width:1920px;height:20px;background:#3c3f41;"></div>
<svg style="left:6px;top:1034px" width="13" height="13" viewBox="0 0 13 13"><rect x="2.5" y="0.5" width="9.5" height="9.5" fill="none" stroke="#bcbec0"/><path d="M0.5 2V11.5H10" fill="none" stroke="#bcbec0"/></svg>
<div class="ui" style="left:1627px;top:1032px;color:#bbbbbb;">5:1</div>
<div class="ui" style="left:1660px;top:1032px;">CRLF</div>
<div class="ui" style="left:1700px;top:1032px;">UTF-8</div>
<div class="ui" style="left:1747px;top:1032px;">4 spaces</div>
<div class="ui" style="left:1815px;top:1032px;">Python 3.9</div>
<svg style="left:1895px;top:1035px" width="11" height="11" viewBox="0 0 11 11"><path d="M1.5 5V3Q1.5 0.5 4 0.5Q6.5 0.5 6.5 3" fill="none" stroke="#afb1b3" stroke-width="1.2"/><rect x="4" y="5" width="7" height="6" fill="#afb1b3"/></svg>
<div class="a" style="left:1915px;top:0px;width:5px;height:1050px;background:rgba(0,0,0,0.07);"></div>
<div class="a" style="left:0px;top:1050px;width:1920px;height:8px;background:#d9d9d9;"></div>
<div class="a" style="left:592px;top:1050px;width:36px;height:8px;background:#ececec;"></div>
<div class="a" style="left:18px;top:1056px;width:8px;height:2px;background:#2a2a2a;"></div>
<div class="a" style="left:54px;top:1056px;width:6px;height:2px;background:#3a3a3a;"></div>
<div class="a" style="left:86px;top:1056px;width:10px;height:2px;background:#8a8a8a;"></div>
<div class="a" style="left:120px;top:1056px;width:3px;height:2px;background:#333;"></div>
<div class="a" style="left:129px;top:1056px;width:3px;height:2px;background:#333;"></div>
<div class="a" style="left:232px;top:1056px;width:8px;height:2px;background:#222;"></div>
<div class="a" style="left:270px;top:1056px;width:8px;height:2px;background:#333;"></div>
<div class="a" style="left:310px;top:1056px;width:6px;height:2px;background:#1e6ad4;"></div>
<div class="a" style="left:345px;top:1056px;width:12px;height:2px;background:#d5212e;"></div>
<div class="a" style="left:420px;top:1056px;width:8px;height:2px;background:#e0484e;"></div>
<div class="a" style="left:460px;top:1056px;width:6px;height:2px;background:#1f8fd6;"></div>
<div class="a" style="left:500px;top:1056px;width:6px;height:2px;background:#93c47d;"></div>
<div class="a" style="left:532px;top:1056px;width:12px;height:2px;background:#4caf50;"></div>
<div class="a" style="left:568px;top:1056px;width:6px;height:2px;background:#2d79e0;"></div>
<div class="a" style="left:604px;top:1056px;width:12px;height:2px;background:#f5e234;"></div>
<div class="a" style="left:638px;top:1056px;width:16px;height:2px;background:#1b6fd6;"></div>
<div class="a" style="left:680px;top:1056px;width:8px;height:2px;background:#222;"></div>
<div class="a" style="left:712px;top:1056px;width:10px;height:2px;background:#888;"></div>
<div class="a" style="left:830px;top:1056px;width:10px;height:2px;background:#1e9e5c;"></div>
<div class="a" style="left:860px;top:1056px;width:12px;height:2px;background:#8c7ae6;"></div>
<div class="a" style="left:902px;top:1056px;width:10px;height:2px;background:#e66f3c;"></div>
<div class="a" style="left:935px;top:1056px;width:14px;height:2px;background:#2a8fd8;"></div>
<div class="a" style="left:975px;top:1056px;width:10px;height:2px;background:#222;"></div>
<div class="a" style="left:1015px;top:1056px;width:6px;height:2px;background:#333;"></div>
<div class="a" style="left:1052px;top:1056px;width:8px;height:2px;background:#1e6ad4;"></div>
<div class="a" style="left:1680px;top:1056px;width:8px;height:2px;background:#222;"></div>
<div class="a" style="left:1795px;top:1056px;width:10px;height:2px;background:#888;"></div>
<div class="a" style="left:1878px;top:1056px;width:14px;height:2px;background:#111;"></div>
</body></html>
